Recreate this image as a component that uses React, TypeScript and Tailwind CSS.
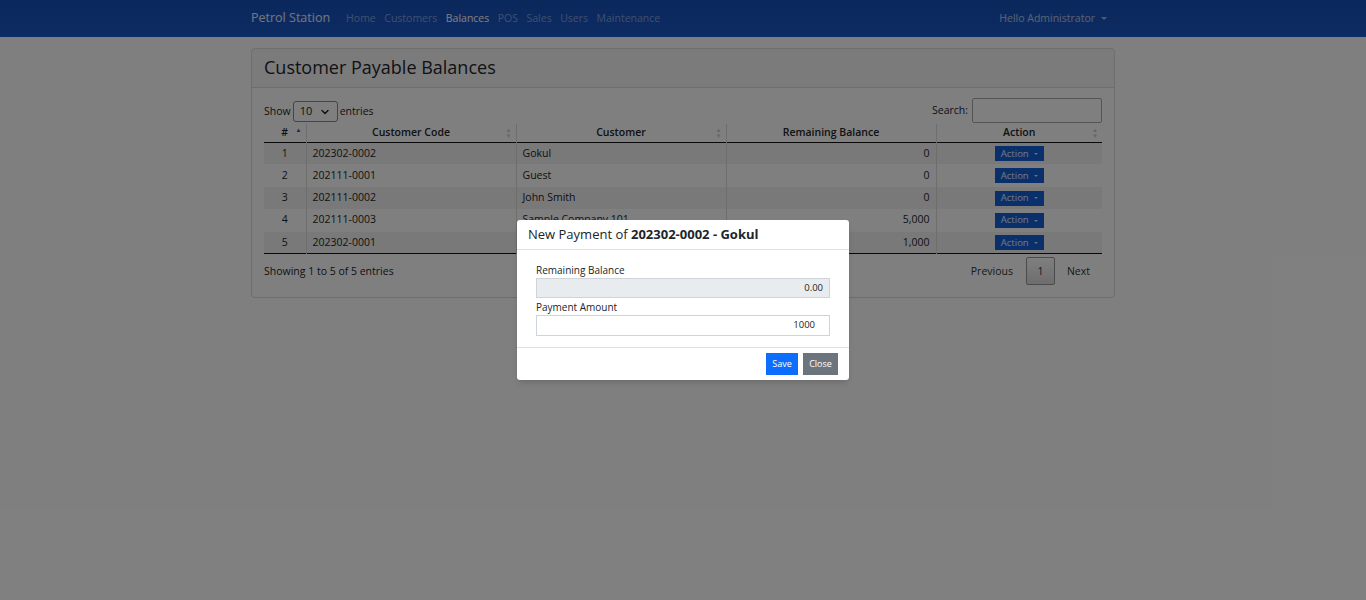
import { ChevronDown } from 'lucide-react';

const rows = [
  { no: 1, code: '202302-0002', name: 'Gokul', balance: '0' },
  { no: 2, code: '202111-0001', name: 'Guest', balance: '0' },
  { no: 3, code: '202111-0002', name: 'John Smith', balance: '0' },
  { no: 4, code: '202111-0003', name: 'Sample Company 101', balance: '5,000' },
  { no: 5, code: '202302-0001', name: 'Sample Customer', balance: '1,000' },
];

const links = ['Home', 'Customers', 'Balances', 'POS', 'Sales', 'Users', 'Maintenance'];

function SortArrows({ active }: { active?: boolean }) {
  return (
    <span className="absolute right-1 top-[3px] flex flex-col leading-none text-[6px]">
      <span className={active ? 'text-[#3f51b5]' : 'text-[#ccc]'}>▲</span>
      <span className={active ? 'text-transparent' : 'text-[#ccc]'}>▼</span>
    </span>
  );
}

export default function App() {
  return (
    <div className="relative min-h-[600px] bg-white text-[#212529] font-['Open_Sans',sans-serif]">
      <nav className="h-[37px] bg-gradient-to-b from-[#1650b8] to-[#1a58c6]">
        <div className="mx-auto flex h-full w-[864px] items-center">
          <span className="text-[12.5px] text-white/90 mr-4">Petrol Station</span>
          <div className="flex gap-[8.5px] text-[10.5px]">
            {links.map((l) => (
              <span key={l} className={l === 'Balances' ? 'text-white' : 'text-white/45'}>
                {l}
              </span>
            ))}
          </div>
          <div className="ml-auto mr-2 flex items-center gap-1.5 text-[10.5px] text-white/65">
            Hello Administrator
            <span className="inline-block border-x-[3px] border-t-[3px] border-x-transparent border-t-white/60" />
          </div>
        </div>
      </nav>

      <div className="mx-auto mt-[11px] w-[864px] rounded border border-[#dcdcdc]">
        <div className="flex h-[39px] items-start border-b border-[#dcdcdc] bg-black/[0.03] px-3 pt-[5px]">
          <h3 className="text-[18px] font-medium text-[#212529]">Customer Payable Balances</h3>
        </div>
        <div className="px-3 pt-[10px] pb-[12px] text-[10.5px]">
          <div className="flex items-center justify-between">
            <div className="flex items-center gap-[2px] pt-[2px]">
              Show
              <span className="flex h-[21px] w-[45px] items-center justify-between rounded-[3px] border border-[#888] px-[6px] text-[11px]">
                10 <ChevronDown size={12} strokeWidth={3} />
              </span>
              entries
            </div>
            <div className="flex items-center gap-1">
              Search:
              <span className="h-[25px] w-[130px] rounded-[2px] border border-[#aaa]" />
            </div>
          </div>

          <table className="mt-[1px] w-full border-collapse text-[10.5px]">
            <thead>
              <tr className="h-[18px] border-b border-[#111]">
                <th className="relative w-[42px] border-r border-[#ddd] font-semibold">
                  #<SortArrows active />
                </th>
                <th className="relative w-[210px] border-r border-[#ddd] font-semibold">
                  Customer Code<SortArrows />
                </th>
                <th className="relative w-[210px] border-r border-[#ddd] font-semibold">
                  Customer<SortArrows />
                </th>
                <th className="relative w-[210px] border-r border-[#ddd] font-semibold">Remaining Balance</th>
                <th className="relative font-semibold">
                  Action<SortArrows />
                </th>
              </tr>
            </thead>
            <tbody className="border-b border-[#111]">
              {rows.map((r) => (
                <tr key={r.no} className={r.no % 2 === 1 ? 'h-[22.4px] bg-black/[0.05]' : 'h-[22.4px]'}>
                  <td className="border-r border-[#ddd] text-center">{r.no}</td>
                  <td className="border-r border-[#ddd] px-[6px]">{r.code}</td>
                  <td className="border-r border-[#ddd] px-[6px]">{r.name}</td>
                  <td className="border-r border-[#ddd] px-[6px] text-right">{r.balance}</td>
                  <td className="text-center">
                    <span className="inline-flex h-[15px] items-center gap-[5px] bg-[#1460d8] px-[6px] text-[9.5px] text-white/90">
                      Action
                      <span className="inline-block border-x-[2.5px] border-t-[2.5px] border-x-transparent border-t-white/80" />
                    </span>
                  </td>
                </tr>
              ))}
            </tbody>
          </table>

          <div className="mt-[3px] flex items-center justify-between">
            <span className="pt-[1px]">Showing 1 to 5 of 5 entries</span>
            <div className="flex items-center text-[10.5px] text-[#333]">
              <span className="pl-3 pr-[13px]">Previous</span>
              <span className="flex h-[28px] w-[29px] items-center justify-center rounded-[2px] border border-[#979797] bg-gradient-to-b from-white to-[#dcdcdc]">
                1
              </span>
              <span className="px-3">Next</span>
            </div>
          </div>
        </div>
      </div>

      <div className="absolute inset-0 bg-black/50" />

      <div className="absolute left-[517px] top-[220px] w-[332px] rounded-[3px] bg-white shadow-md">
        <div className="flex h-[30px] items-center border-b border-[#dee2e6] px-[11px] text-[13px]">
          New Payment of&nbsp;<b className="font-bold">202302-0002 - Gokul</b>
        </div>
        <div className="px-[19px] pt-[13px] pb-[11px] text-[10px]">
          <label className="block leading-[14px]">Remaining Balance</label>
          <div className="mt-[1px] flex h-[20px] items-center justify-end border border-[#ced4da] bg-[#e9ecef] pr-[6px] text-[9.5px]">
            0.00
          </div>
          <label className="mt-[2px] block leading-[14px]">Payment Amount</label>
          <div className="mt-[1px] flex h-[21px] items-center justify-end border border-[#ced4da] pr-[14px] text-[9.5px]">
            1000
          </div>
        </div>
        <div className="flex justify-end gap-[5px] border-t border-[#dee2e6] px-[11px] py-[5px]">
          <span className="flex h-[22px] w-[32px] items-center justify-center bg-[#0d6efd] text-[9px] text-white">
            Save
          </span>
          <span className="flex h-[22px] w-[35px] items-center justify-center bg-[#6c757d] text-[9px] text-white">
            Close
          </span>
        </div>
      </div>
    </div>
  );
}
